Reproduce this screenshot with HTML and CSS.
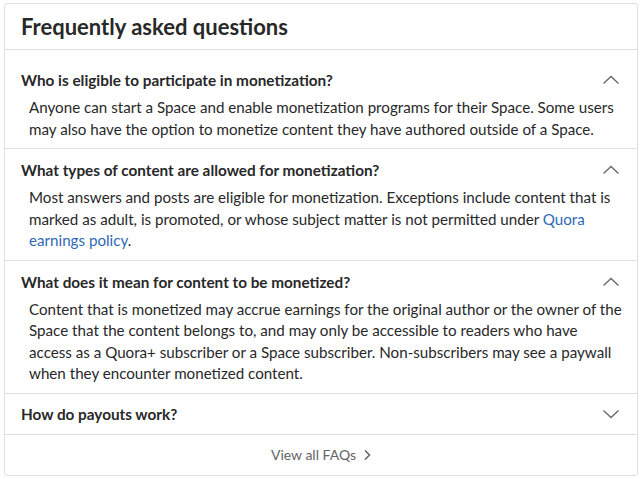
FILE: index.html
```html
<html lang="en">
<head>
    <meta charset="UTF-8">
    <meta name="viewport" content="width=device-width, initial-scale=1.0">
    <title>Frequently asked questions</title>
    <link rel="stylesheet" href="styles.css">
</head>
<body>
    <div class="card">
        <div class="card-header">
            <h2>Frequently asked questions</h2>
        </div>

        <div class="faq-item first">
            <div class="question">
                <span>Who is eligible to participate in monetization?</span>
                <svg class="chevron" width="18" height="10" viewBox="0 0 18 10"><polyline points="1.5,8.5 9,1.5 16.5,8.5" /></svg>
            </div>
            <div class="answer">
                Anyone can start a Space and enable monetization programs for their Space. Some users may also have the option to monetize content they have authored outside of a Space.
            </div>
        </div>

        <div class="faq-item">
            <div class="question">
                <span>What types of content are allowed for monetization?</span>
                <svg class="chevron" width="18" height="10" viewBox="0 0 18 10"><polyline points="1.5,8.5 9,1.5 16.5,8.5" /></svg>
            </div>
            <div class="answer">
                Most answers and posts are eligible for monetization. Exceptions include content that is marked as adult, is promoted, or whose subject matter is not permitted under <a href="#">Quora earnings policy</a>.
            </div>
        </div>

        <div class="faq-item">
            <div class="question">
                <span>What does it mean for content to be monetized?</span>
                <svg class="chevron" width="18" height="10" viewBox="0 0 18 10"><polyline points="1.5,8.5 9,1.5 16.5,8.5" /></svg>
            </div>
            <div class="answer">
                Content that is monetized may accrue earnings for the original author or the owner of the Space that the content belongs to, and may only be accessible to readers who have access as a Quora+ subscriber or a Space subscriber. Non-subscribers may see a paywall when they encounter monetized content.
            </div>
        </div>

        <div class="faq-item closed">
            <div class="question">
                <span>How do payouts work?</span>
                <svg class="chevron" width="18" height="10" viewBox="0 0 18 10"><polyline points="1.5,1.5 9,8.5 16.5,1.5" /></svg>
            </div>
        </div>

        <div class="card-footer">
            <a href="#" class="view-all">View all FAQs
                <svg width="8" height="12" viewBox="0 0 8 12"><polyline points="2,1.5 6.5,6 2,10.5" /></svg>
            </a>
        </div>
    </div>
</body>
</html>
```

FILE: styles.css
```css
body {
    font-family: 'Lato', 'Liberation Sans', sans-serif;
    margin: 0;
    padding: 3px 5px 4px 4px;
    background: #fff;
    color: #282829;
}
.card {
    border: 1px solid #dee0e1;
    border-radius: 3px;
    background-color: #fff;
}
.card-header {
    height: 45px;
    padding: 0 16px;
    display: flex;
    align-items: center;
    border-bottom: 1px solid #dee0e1;
}
.card-header h2 {
    margin: 0;
    font-size: 22px;
    font-weight: 700;
    color: #282829;
}
.faq-item {
    border-bottom: 1px solid #dee0e1;
}
.faq-item.first {
    padding-top: 9px;
}
.question {
    height: 34px;
    padding: 4px 17px 0 16px;
    display: flex;
    align-items: center;
    justify-content: space-between;
    font-size: 15.3px;
    font-weight: 700;
    color: #282829;
}
.faq-item.closed .question {
    height: 36px;
    padding-top: 2px;
    padding-bottom: 2px;
}
.chevron polyline {
    fill: none;
    stroke: #666768;
    stroke-width: 1.3;
}
.answer {
    padding: 0 13.5px 8px 24px;
    font-size: 15.17px;
    line-height: 21.5px;
    color: #282829;
}
.answer a {
    color: #2e69b8;
    text-decoration: none;
}
.card-footer {
    height: 40px;
    display: flex;
    align-items: center;
    justify-content: center;
}
.view-all {
    color: #636466;
    font-size: 14px;
    text-decoration: none;
    display: flex;
    align-items: center;
    gap: 7px;
}
.view-all polyline {
    fill: none;
    stroke: #636466;
    stroke-width: 1.5;
}
```
